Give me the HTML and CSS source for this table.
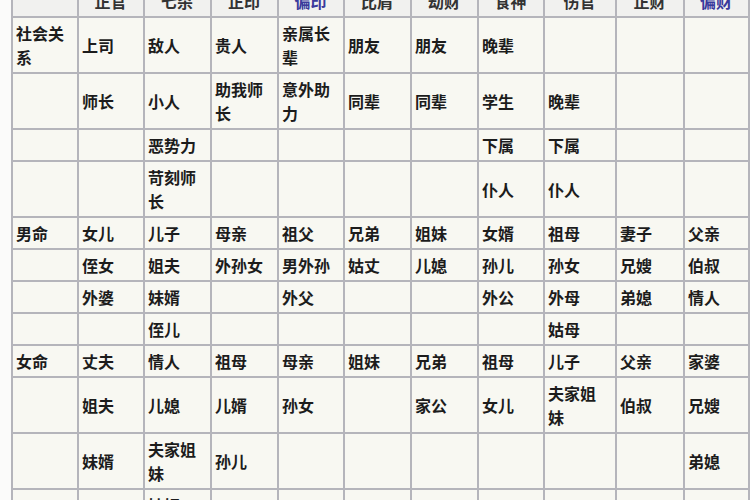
FILE: index.html
```html
<!DOCTYPE html>
<html lang="zh">
<head>
<meta charset="utf-8">
<link rel="stylesheet" href="styles.css">
</head>
<body>
<div class="frame">
<table class="grid">
<colgroup>
<col class="c66"><col class="c66"><col class="c67"><col class="c67"><col class="c66"><col class="c67"><col class="c67"><col class="c66"><col class="c72"><col class="c68"><col class="c65">
</colgroup>
<tr class="head"><th></th><th>正官</th><th>七杀</th><th>正印</th><th class="link">偏印</th><th>比肩</th><th>劫财</th><th>食神</th><th>伤官</th><th>正财</th><th class="link">偏财</th></tr>
<tr><td>社会关系</td><td>上司</td><td>敌人</td><td>贵人</td><td>亲属长辈</td><td>朋友</td><td>朋友</td><td>晚辈</td><td></td><td></td><td></td></tr>
<tr><td></td><td>师长</td><td>小人</td><td>助我师长</td><td>意外助力</td><td>同辈</td><td>同辈</td><td>学生</td><td>晚辈</td><td></td><td></td></tr>
<tr><td></td><td></td><td>恶势力</td><td></td><td></td><td></td><td></td><td>下属</td><td>下属</td><td></td><td></td></tr>
<tr><td></td><td></td><td>苛刻师长</td><td></td><td></td><td></td><td></td><td>仆人</td><td>仆人</td><td></td><td></td></tr>
<tr><td>男命</td><td>女儿</td><td>儿子</td><td>母亲</td><td>祖父</td><td>兄弟</td><td>姐妹</td><td>女婿</td><td>祖母</td><td>妻子</td><td>父亲</td></tr>
<tr><td></td><td>侄女</td><td>姐夫</td><td>外孙女</td><td>男外孙</td><td>姑丈</td><td>儿媳</td><td>孙儿</td><td>孙女</td><td>兄嫂</td><td>伯叔</td></tr>
<tr><td></td><td>外婆</td><td>妹婿</td><td></td><td>外父</td><td></td><td></td><td>外公</td><td>外母</td><td>弟媳</td><td>情人</td></tr>
<tr><td></td><td></td><td>侄儿</td><td></td><td></td><td></td><td></td><td></td><td>姑母</td><td></td><td></td></tr>
<tr><td>女命</td><td>丈夫</td><td>情人</td><td>祖母</td><td>母亲</td><td>姐妹</td><td>兄弟</td><td>祖母</td><td>儿子</td><td>父亲</td><td>家婆</td></tr>
<tr><td></td><td>姐夫</td><td>儿媳</td><td>儿婿</td><td>孙女</td><td></td><td>家公</td><td>女儿</td><td>夫家姐妹</td><td>伯叔</td><td>兄嫂</td></tr>
<tr><td></td><td>妹婿</td><td>夫家姐妹</td><td>孙儿</td><td></td><td></td><td></td><td></td><td></td><td></td><td>弟媳</td></tr>
<tr><td></td><td></td><td>妯娌</td><td></td><td></td><td></td><td></td><td></td><td></td><td></td><td></td></tr>
</table>
</div>
</body>
</html>
```

FILE: styles.css
```css
html, body {
  margin: 0;
  padding: 0;
  background: #fbfbfa;
}
.frame {
  width: 750px;
  height: 500px;
  overflow: hidden;
  padding-left: 11px;
  box-sizing: border-box;
}
.grid {
  margin-top: -16px;
  border-collapse: collapse;
  table-layout: fixed;
  width: 738px;
  font-family: "Noto Sans CJK SC", "Noto Sans", sans-serif;
  font-size: 16px;
  line-height: 24px;
  color: #1c1c1c;
}
.c65 { width: 65px; }
.c66 { width: 66px; }
.c67 { width: 67px; }
.c68 { width: 68px; }
.c72 { width: 72px; }
.grid th, .grid td {
  border: 2px solid #b5b5bb;
  padding: 3px 4px 3px 3px;
  vertical-align: middle;
  text-align: left;
  background: #f8f8f2;
  font-weight: 700;
}
.grid th {
  background: #f1f1ef;
  text-align: center;
  color: #333;
}
.grid th.link {
  color: #3a3a9c;
}
```
